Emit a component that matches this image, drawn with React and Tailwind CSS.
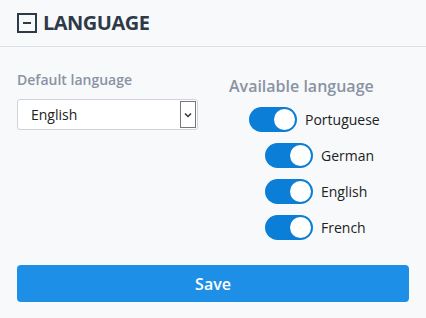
import React, { useState } from "react";

const Toggle = ({ label, on, onChange, indent }) => (
  <label className={`flex items-center gap-2 cursor-pointer ${indent}`}>
    <button
      type="button"
      onClick={onChange}
      className={`relative w-[48px] h-[25px] rounded-full ${on ? "bg-[#0b7ed8]" : "bg-gray-300"}`}
    >
      <span
        className={`absolute top-[2px] w-[21px] h-[21px] rounded-full bg-white ${on ? "left-[25px]" : "left-[2px]"}`}
      />
    </button>
    <span className="text-[14px] text-[#222]">{label}</span>
  </label>
);

const App = () => {
  const [langs, setLangs] = useState({
    Portuguese: true,
    German: true,
    English: true,
    French: true,
  });

  return (
    <div className="w-[426px] h-[318px] bg-[#f7f9fb] font-['Open_Sans',sans-serif]">
      {/* Header */}
      <div className="h-[47px] flex items-center gap-[6px] px-[17px] border-b border-[#dcdfe3]">
        <span className="w-[20px] h-[20px] border-2 border-[#2f3a48] flex items-center justify-center">
          <span className="w-[8px] h-[2px] bg-[#2f3a48]" />
        </span>
        <h2 className="text-[20px] font-bold text-[#2f3a48] tracking-tight">LANGUAGE</h2>
      </div>

      {/* Body */}
      <div className="grid grid-cols-2 gap-4 px-[17px] pt-[22px]">
        <div>
          <p className="text-[14px] font-semibold text-[#8a93a2] mb-[9px]">Default language</p>
          <div className="w-[181px] h-[31px] bg-white border border-[#cfd4da] rounded-[3px] flex items-center">
            <span className="flex-1 pl-[13px] text-[14px] text-[#222]">English</span>
            <span className="w-[16px] h-[27px] mr-[1px] border border-[#777] flex items-center justify-center">
              <svg width="8" height="6" viewBox="0 0 8 6">
                <path d="M1 1.5 L4 4.5 L7 1.5" fill="none" stroke="#333" strokeWidth="1.5" />
              </svg>
            </span>
          </div>
        </div>

        <div>
          <p className="pl-2 text-[16px] font-semibold text-[#8a93a2] mt-[5px] mb-[9px]">Available language</p>
          <div className="flex flex-col gap-[11px]">
            {Object.keys(langs).map((l, i) => (
              <Toggle
                key={l}
                label={l}
                indent={i === 0 ? "ml-[28px]" : "ml-[44px]"}
                on={langs[l]}
                onChange={() => setLangs({ ...langs, [l]: !langs[l] })}
              />
            ))}
          </div>
        </div>
      </div>

      <div className="px-[17px] pt-[25px]">
        <button className="w-full h-[37px] rounded-[4px] bg-[#1e8fe6] text-white text-[16px] font-semibold">
          Save
        </button>
      </div>
    </div>
  );
};

export default App;
